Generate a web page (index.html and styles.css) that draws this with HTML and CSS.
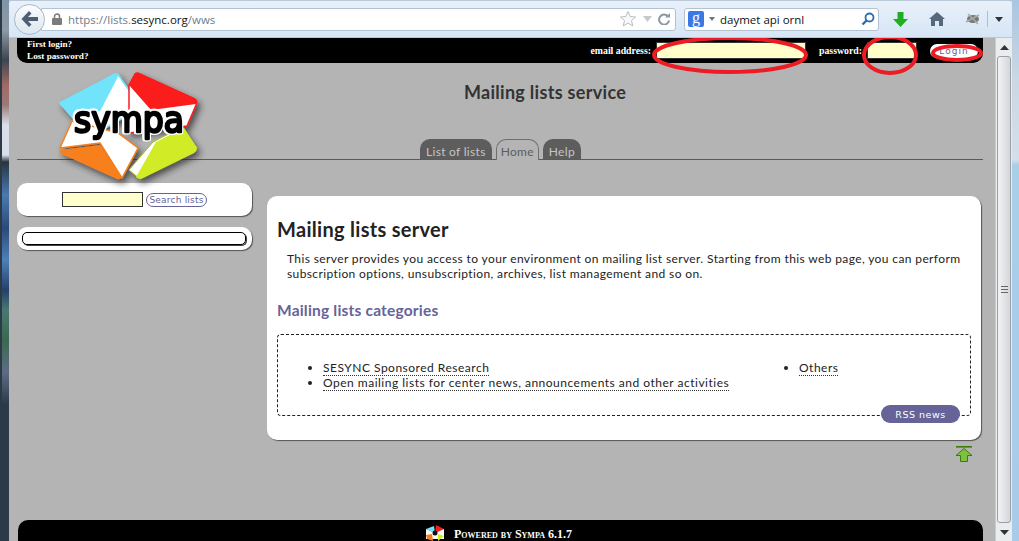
FILE: index.html
```html
<!DOCTYPE html>
<html lang="en">
<head>
<meta charset="utf-8">
<title>Mailing lists service</title>
<link rel="stylesheet" href="styles.css">
</head>
<body>
<div class="desk-left"></div>
<div class="browser">
  <div class="toolbar">
    <button class="back" aria-label="Back">
      <svg width="20" height="18" viewBox="0 0 20 18"><path d="M9 1 L1.500 9 L9 17 L11.500 14.500 L8 11 L18 11 L18 7 L8 7 L11.500 3.500 Z" fill="#4d5f74"/></svg>
    </button>
    <div class="urlbar">
      <svg class="lock" width="10" height="12" viewBox="0 0 10 12"><path d="M2.500 5V3.500a2.500 2.500 0 0 1 5 0V5" fill="none" stroke="#7b7b7b" stroke-width="1.500"/><rect x="0" y="5" width="10" height="7" rx="1" fill="#7b7b7b"/></svg>
      <span class="url">https://lists.<b>sesync.org</b>/wws</span>
      <span class="url-icons">
        <svg width="18" height="18" viewBox="0 0 18 18"><path d="M9 1.500 11.200 6.500 16.600 7 12.500 10.600 13.800 16 9 13.100 4.200 16 5.500 10.600 1.400 7 6.800 6.500Z" fill="#f6f8fa" stroke="#b9bec4"/></svg>
        <svg width="9" height="6" viewBox="0 0 9 6"><path d="M0 0H9L4.500 6Z" fill="#c4cad0"/></svg>
        <svg width="12" height="12" viewBox="0 0 12 12"><path d="M10 3.500A5 5 0 1 0 11 7.500" fill="none" stroke="#8c98a5" stroke-width="2"/><path d="M7 4.500H12V0Z" fill="#8c98a5"/></svg>
      </span>
    </div>
    <div class="searchbar">
      <span class="g-badge">g</span>
      <svg class="g-drop" width="6" height="4" viewBox="0 0 6 4"><path d="M0 0H6L3 4Z" fill="#6c7580"/></svg>
      <span class="query">daymet api ornl</span>
      <svg width="14" height="14" viewBox="0 0 14 14"><circle cx="8.500" cy="5.500" r="4" fill="none" stroke="#2f6cb0" stroke-width="1.800"/><path d="M5.500 8.500 1.500 12.500" stroke="#2f6cb0" stroke-width="2.400"/></svg>
    </div>
    <svg class="tool dl" width="15" height="15" viewBox="0 0 15 15"><path d="M4.500 0H10.500V7H15L7.500 15 0 7H4.500Z" fill="#1fae1f"/></svg>
    <svg class="tool home" width="16" height="14" viewBox="0 0 16 14"><path d="M8 0 16 7H14V14H10V9H6V14H2V7H0Z" fill="#56687a"/></svg>
    <svg class="tool bug" width="16" height="14" viewBox="0 0 16 14"><ellipse cx="8" cy="7" rx="6" ry="4" fill="#777"/><path d="M1 10 14 3M3 2 13 12" stroke="#aaa" stroke-width="1.500"/></svg>
    <span class="tool-sep"></span>
    <svg class="tool menu" width="8" height="5" viewBox="0 0 8 5"><path d="M0 0H8L4 5Z" fill="#333"/></svg>
  </div>
  <div class="viewport">
    <div class="page">
      <div class="topbar">
        <div class="top-links"><a>First login?</a><a>Lost password?</a></div>
        <form class="login">
          <label>email address:</label><span class="field email"></span>
          <label class="pw">password:</label><span class="field password"></span>
          <span class="login-btn">Login</span>
        </form>
      </div>
      <header class="head">
        <svg class="logo" width="145" height="115" viewBox="0 0 145 115">
          <defs><filter id="sh" x="-10%" y="-10%" width="125%" height="125%"><feDropShadow dx="3" dy="4" stdDeviation="3" flood-color="#222" flood-opacity=".7"/></filter></defs>
          <g filter="url(#sh)" stroke-linejoin="round">
            <path d="M1 32 56 4 Q59 2 60 5 L79 32 69 44 41 60 13 46Z" fill="#fff" stroke="#71e3fb" stroke-width="1.500"/>
            <path d="M1 32 56 3 Q59 2 58 6 L41 39 13 45Z" fill="#71e3fb" stroke="#71e3fb" stroke-width="1.500"/>
            <path d="M70 14 76 3 Q78 1 81 3 L136 28 Q139 30 137 34 L128 55 70 62Z" fill="#fff" stroke="#fb1a1c" stroke-width="1.500"/>
            <path d="M76 3 Q78 1 81 3 L136 28 Q139 30 137 33 L92 39 70 14Z" fill="#fb1a1c"/>
            <path d="M13 50 1 77 41 72 63 107 79 77 59 62Z" fill="#fff" stroke="#f8801c" stroke-width="1.500" />
            <path d="M1 79 41 74 62 106 Q62 109 58 108 L5 84 Q0 82 1 79Z" fill="#f8801c"/>
            <path d="M70 99 94 71 123 56 138 77 81 108Z" fill="#fff" stroke="#a4c020"/>
            <path d="M97 71 125 57 138 77 Q138 80 135 82 L84 107 Q80 109 77 106Z" fill="#d1eb28"/>
          </g>
          <text class="logo-text" x="15" y="61" textLength="110" lengthAdjust="spacingAndGlyphs">sympa</text>
        </svg>
        <h1 class="service">Mailing lists service</h1>
        <nav class="tabs">
          <a class="tab">List of lists</a>
          <a class="tab current">Home</a>
          <a class="tab">Help</a>
        </nav>
      </header>
      <div class="columns">
        <aside class="side">
          <div class="card search"><span class="field small"></span><span class="search-btn">Search lists</span></div>
          <div class="card empty"><div class="empty-inner"></div></div>
        </aside>
        <div class="content">
          <main class="panel">
            <h2>Mailing lists server</h2>
            <p>This server provides you access to your environment on mailing list server. Starting from this web page, you can perform subscription options, unsubscription, archives, list management and so on.</p>
            <h3>Mailing lists categories</h3>
            <div class="cats">
              <ul class="cat-a"><li><a>SESYNC Sponsored Research</a></li><li><a>Open mailing lists for center news, announcements and other activities</a></li></ul>
              <ul class="cat-b"><li><a>Others</a></li></ul>
              <span class="rss">RSS news</span>
            </div>
          </main>
          <div class="to-top">
            <svg width="18" height="16" viewBox="0 0 18 16"><path d="M1 .800H17" stroke="#3f7a06" stroke-width="1.600"/><path d="M9 2.500 17 9.500H12.500V15.500H5.500V9.500H1Z" fill="#7cc242" stroke="#3f7a06"/></svg>
          </div>
        </div>
      </div>
      <footer class="foot">
        <svg width="22" height="16" viewBox="0 0 22 16"><path d="M11 8 2 4 10 1Z" fill="#71e3fb"/><path d="M11 8 20 4 12 0Z" fill="#fb1a1c"/><path d="M2 4 11 8 20 4 20 14 2 14Z" fill="#fff"/><path d="M2 10 8 9 9 16 3 14Z" fill="#f8801c"/><path d="M14 9 20 11 14 16Z" fill="#d1eb28"/><circle cx="11" cy="8" r="2.500" fill="#111"/></svg>
        <span class="powered">Powered by Sympa 6.1.7</span>
      </footer>
    </div>
    <div class="scrollbar">
      <span class="sb-btn"><svg width="9" height="5" viewBox="0 0 9 5"><path d="M0 5H9L4.500 0Z" fill="#333"/></svg></span>
      <span class="sb-thumb"><i></i></span>
      <span class="sb-btn"><svg width="9" height="5" viewBox="0 0 9 5"><path d="M0 0H9L4.500 5Z" fill="#333"/></svg></span>
    </div>
    <svg class="marks" width="1019" height="100" viewBox="0 0 1019 100">
      <g fill="none" stroke="#ed1c24" stroke-width="4">
        <ellipse cx="730" cy="17" rx="76" ry="17"/>
        <ellipse cx="890" cy="17" rx="26" ry="18"/>
        <ellipse cx="957" cy="15" rx="24" ry="7"/>
      </g>
    </svg>
  </div>
</div>
<div class="desk-right"></div>
</body>
</html>
```

FILE: styles.css
```css
* { box-sizing: border-box; }
html, body { height: 100%; }
body {
  margin: 0;
  display: flex;
  height: 541px;
  overflow: hidden;
  background: #a9cbe8;
  font-family: "Liberation Sans", sans-serif;
}
a { color: inherit; }
.desk-left {
  width: 9px;
  flex: none;
  border-left: 2px solid #2c3a46;
  background: linear-gradient(#7f95a8 0, #8e9aa5 30px, #3e4650 60px, #a06a64 85px, #9a7a78 105px, #d8dfe8 125px, #d8dfe8 155px, #28343f 162px, #4a7ab0 195px, #2c4a78 228px, #4f80b8 260px, #26406a 290px, #4a7870 310px, #3a6850 340px, #5f6c84 372px, #2a3a48 405px, #2a3a48 541px);
}
.desk-right {
  flex: none;
  width: 7px;
  background: linear-gradient(#a9c6e0 0, #c9d8e4 80px, #d4dfe8 160px, #a9cfe8 165px, #a9cbe8 541px);
}
.browser {
  flex: none;
  width: 1003px;
  display: flex;
  flex-direction: column;
}
.toolbar {
  height: 38px;
  flex: none;
  display: flex;
  align-items: center;
  padding: 0 0 0 5px;
  background: linear-gradient(#e9f1fa, #d6e5f5);
  border-top: 1px solid #b9c8d8;
  border-bottom: 1px solid #b7c7d8;
  border-radius: 3px 3px 0 0;
}
.back {
  width: 31px;
  height: 31px;
  flex: none;
  border-radius: 50%;
  padding: 0;
  border: 1px solid #a9b7c7;
  background: linear-gradient(#fbfcfe, #dde6ef);
  display: flex;
  align-items: center;
  justify-content: center;
  position: relative;
  z-index: 1;
}
.urlbar {
  margin-left: -4px;
  width: 635px;
  height: 23px;
  flex: none;
  display: flex;
  align-items: center;
  padding: 0 5px 0 10px;
  background: #fff;
  border: 1px solid #b4c3d2;
  border-radius: 0 3px 3px 0;
}
.lock { flex: none; }
.url {
  margin-left: 6px;
  font: 11.500px "Open Sans", sans-serif;
  color: #6d7f8c;
}
.url b { font-weight: 400; color: #111; }
.url-icons {
  margin-left: auto;
  display: flex;
  align-items: center;
  gap: 6px;
}
.searchbar {
  margin-left: 8px;
  width: 195px;
  height: 23px;
  flex: none;
  display: flex;
  align-items: center;
  padding: 0 3px;
  background: #fff;
  border: 1px solid #b4c3d2;
  border-radius: 3px;
}
.g-badge {
  width: 16px;
  height: 16px;
  flex: none;
  border-radius: 2px;
  background: #3b78e7;
  color: #fff;
  font: 400 16px/13px "Liberation Serif", serif;
  text-align: center;
}
.g-drop { margin-left: 5px; flex: none; }
.query {
  margin-left: 5px;
  flex: 1;
  font: 11.500px "Open Sans", sans-serif;
  color: #111;
}
.tool { flex: none; }
.dl { margin-left: 14px; }
.home { margin-left: 21px; }
.bug { margin-left: 20px; }
.tool-sep { width: 1px; height: 16px; margin-left: 6px; background: #b0bdc9; flex: none; }
.menu { margin-left: 7px; }

.viewport {
  position: relative;
  flex: 1;
  display: flex;
  min-height: 0;
}
.page {
  width: 986px;
  flex: none;
  padding: 0 12px 0 8px;
  background: #b4b4b4;
  display: flex;
  flex-direction: column;
}
.topbar {
  height: 25px;
  flex: none;
  display: flex;
  justify-content: space-between;
  padding: 0 5px 0 10px;
  background: #000;
  border-radius: 0 0 10px 10px;
  color: #fff;
  font: 700 9.800px "Liberation Serif", serif;
}
.top-links { display: flex; flex-direction: column; font-size: 9.200px; line-height: 12px; }
.login { display: flex; align-items: center; height: 25px; }
.field {
  display: block;
  background: #ffffcc;
  border: 1px solid #333;
}
.email { width: 150px; height: 17px; margin: 0 13px 0 5px; }
.password { width: 50px; height: 17px; margin-left: 5px; }
.login-btn {
  margin-left: 13px;
  width: 48px;
  height: 14px;
  border-radius: 7px;
  background: #fff;
  color: #666399;
  text-align: center;
  font: 9px/14px "DejaVu Sans", sans-serif;
  letter-spacing: 1px;
}
.head {
  height: 97px;
  flex: none;
  position: relative;
  display: flex;
  flex-direction: column;
  border-bottom: 1px solid #5a5a5a;
}
.logo { position: absolute; left: 42px; top: 8px; overflow: visible; z-index: 1; }
.logo-text {
  font: 400 36px "DejaVu Sans", sans-serif;
  fill: #000;
  stroke: #000;
  stroke-width: 2.500;
  stroke-linejoin: round;
  filter: drop-shadow(1.200px 0 0 #fff) drop-shadow(-1.200px 0 0 #fff) drop-shadow(0 1.200px 0 #fff) drop-shadow(0 -1.200px 0 #fff);
}
.service {
  margin: 19px 0 0;
  padding-left: 90px;
  text-align: center;
  font: 700 18px/20px "Lato", sans-serif;
  letter-spacing: .3px;
  color: #333;
  height: 20px;
}
.tabs {
  margin-top: auto;
  display: flex;
  align-items: flex-end;
  gap: 4px;
  padding-left: 403px;
}
.tab {
  height: 20px;
  padding: 0 6px;
  border-radius: 10px 10px 0 0;
  background: #5d5d5d;
  color: #c5c5c5;
  font: 12px/25px "Lato", sans-serif;
  letter-spacing: .3px;
}
.tab.current {
  height: 21px;
  padding: 0 4px;
  position: relative;
  top: 1px;
  background: #b4b4b4;
  color: #5d5d5d;
  border: 1px solid #6f6f6f;
  border-bottom: 0;
  line-height: 24px;
}
.columns {
  display: flex;
  flex: 1;
  min-height: 0;
}
.side {
  width: 235px;
  flex: none;
  margin-top: 23px;
  display: flex;
  flex-direction: column;
  gap: 11px;
}
.card {
  background: #fff;
  border-radius: 10px;
  box-shadow: 1px 1px 1px #555;
}
.card.search {
  height: 33px;
  display: flex;
  justify-content: center;
  align-items: center;
  gap: 3px;
}
.field.small { width: 81px; height: 15px; }
.search-btn {
  width: 61px;
  height: 14px;
  border: 1px solid #666399;
  border-radius: 7px;
  color: #666399;
  text-align: center;
  font: 9px/12px "DejaVu Sans", sans-serif;
  letter-spacing: .2px;
}
.card.empty { height: 23px; padding: 5px 6px 5px 5px; }
.empty-inner { height: 13px; border: 1px solid #000; border-radius: 5px; box-shadow: 1px 1px 0 #444; }
.content {
  margin-left: 15px;
  width: 714px;
  flex: none;
  padding-top: 36px;
  display: flex;
  flex-direction: column;
}
.panel {
  height: 244px;
  flex: none;
  padding: 20px 10px 0;
  background: #fff;
  border-radius: 10px;
  box-shadow: 1px 1px 1px #555;
}
.panel h2 {
  margin: 0;
  font: 700 20px/26px "Lato", sans-serif;
  letter-spacing: .3px;
  color: #222;
}
.panel p {
  margin: 9px 0 0;
  padding-left: 10px;
  font: 12px/15px "Lato", sans-serif;
  letter-spacing: .38px;
  color: #222;
}
.panel h3 {
  margin: 19px 0 0;
  font: 700 15.500px/20px "Lato", sans-serif;
  letter-spacing: .2px;
  color: #666399;
}
.cats {
  position: relative;
  margin-top: 14px;
  height: 82px;
  display: flex;
  padding: 25px 0 0 45px;
  border: 1px dashed #222;
  border-radius: 4px;
  font: 12px/15px "Lato", sans-serif;
  letter-spacing: .5px;
  color: #222;
}
.cats ul { margin: 0; padding: 0; list-style: disc; }
.cat-a { width: 476px; flex: none; }
.cat-b { flex: 1; }
.cats a { border-bottom: 1px dotted #333; }
.rss {
  position: absolute;
  right: 10px;
  bottom: -8px;
  width: 79px;
  height: 18px;
  border-radius: 9px;
  background: #666399;
  color: #fff;
  text-align: center;
  font: 9.500px/19px "DejaVu Sans", sans-serif;
  letter-spacing: .5px;
}
.to-top {
  display: flex;
  justify-content: flex-end;
  padding: 6px 8px 0 0;
}
.foot {
  height: 21px;
  flex: none;
  margin-left: 1px;
  display: flex;
  justify-content: center;
  align-items: flex-start;
  gap: 8px;
  padding: 5px 5px 0 0;
  background: #000;
  border-radius: 10px 10px 0 0;
  color: #fff;
}
.powered {
  font: 700 12px/18px "Liberation Serif", serif;
  font-variant: small-caps;
}
.scrollbar {
  width: 17px;
  flex: none;
  display: flex;
  flex-direction: column;
  background: #e9edf0;
  border-left: 1px solid #c8ccd0;
}
.sb-btn {
  height: 18px;
  flex: none;
  display: flex;
  align-items: center;
  justify-content: center;
}
.sb-thumb {
  flex: 1;
  margin: 0 1px;
  border: 1px solid #9aa0a6;
  border-radius: 3px;
  background: linear-gradient(90deg, #f2f3f5, #d4d6da);
  display: flex;
  align-items: center;
  justify-content: center;
}
.sb-thumb i {
  width: 7px;
  height: 7px;
  border-top: 1px solid #666;
  border-bottom: 1px solid #666;
  background: linear-gradient(#666, #666) center / 100% 1px no-repeat;
}
.marks {
  position: absolute;
  left: -9px;
  top: 0;
  pointer-events: none;
  z-index: 2;
}
```
